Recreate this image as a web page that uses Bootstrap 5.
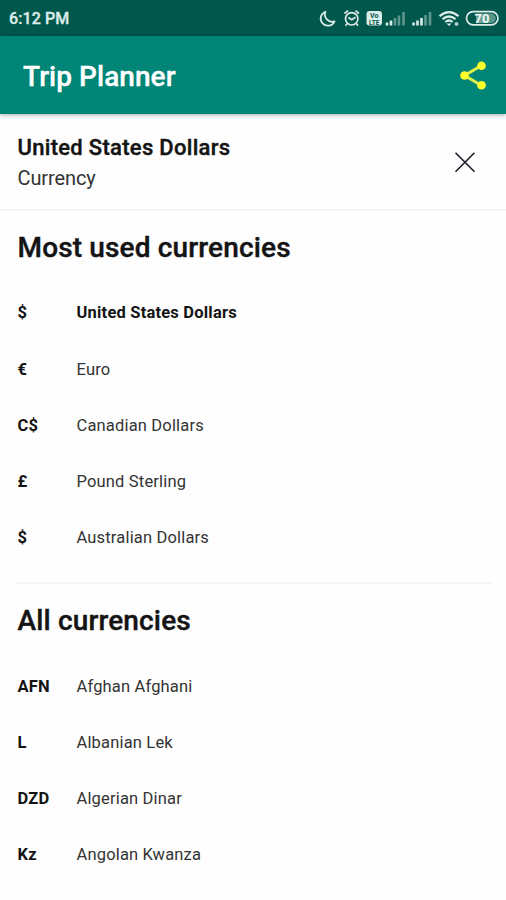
<!DOCTYPE html>
<html lang="en">
<head>
<meta charset="utf-8">
<meta name="viewport" content="width=device-width, initial-scale=1">
<title>Trip Planner</title>
<link href="https://cdn.jsdelivr.net/npm/bootstrap@5.3.0/dist/css/bootstrap.min.css" rel="stylesheet">
<style>
body { font-family: Roboto, "Liberation Sans", sans-serif; color: #141414; background: #fefefe; height: 900px; overflow: hidden; }
svg { display: block; flex: none; }
.status-bar { height: 36px; background: #00574b; color: #dcece9; padding: 1px 7px 0 9px; }
.clock { font-size: 16px; font-weight: 500; letter-spacing: .1px; -webkit-text-stroke: .35px; }
.app-bar { height: 78px; background: #008577; padding: 2px 19px 0 23px; box-shadow: 0 1px 4px rgba(0,0,0,.35); }
.app-title { font-size: 28px; font-weight: 500; line-height: 36px; letter-spacing: .05px; padding-top: 2px; -webkit-text-stroke: .35px; }
.selection { height: 97px; padding: 2px 30px 0 17.5px; border-bottom: 2px solid #f3f3f3; }
.selection-name { font-size: 22px; font-weight: 500; line-height: 30px; letter-spacing: .3px; -webkit-text-stroke: .4px; }
.selection-kind { font-size: 20px; line-height: 30px; color: #333; letter-spacing: -.1px; }
.section-title { font-size: 28px; font-weight: 500; height: 74px; padding-left: 17.5px; letter-spacing: .15px; -webkit-text-stroke: .4px; }
.currency { height: 56.25px; padding: 1px 17.5px 0; font-size: 16.5px; letter-spacing: .17px; color: #333; }
.symbol { width: 59px; font-weight: 700; color: #141414; }
.chosen { font-weight: 700; color: #141414; letter-spacing: .2px; }
.divider { height: 2px; background: #f6f6f6; margin: 16px 14px 0 16px; }
</style>
</head>
<body>
<header>
  <div class="status-bar d-flex align-items-center justify-content-between">
    <span class="clock">6:12 PM</span>
    <svg width="180" height="24" viewBox="0 0 180 24" fill="none" stroke="#dcece9" stroke-width="1.7">
      <path d="M6.500 4.700A7.200 7.200 0 1 0 15.500 14.300A7.200 7.200 0 0 1 6.500 4.700Z" stroke-linejoin="round"/>
      <circle cx="32.700" cy="11.800" r="6.200"/>
      <path d="M25.500 6.500 29 3.600M40 6.500 36.500 3.600M29.500 10.500 32.700 12.800 36.500 10.300M28 16.800 26.500 18.800M37.500 16.800 39 18.800"/>
      <rect x="47.500" y="4" width="15.500" height="14.500" rx="3" fill="#dcece9" stroke="none"/>
      <g fill="#00574b" stroke="none" font-family="Roboto, sans-serif" font-weight="700" text-anchor="middle"><text x="55.200" y="11" font-size="7">Vo</text><text x="55.200" y="17.500" font-size="6.500">LTE</text></g>
      <g stroke-width="2.600"><path d="M68 18.500V15.500M72 18.500V13.500"/><path stroke="#5f968d" d="M76 18.500V11M80 18.500V8.500M84.500 18.500V5"/><path d="M94.500 18.500V15.500M98.500 18.500V13.500M102.500 18.500V11"/><path stroke="#5f968d" d="M106.500 18.500V8M111 18.500V5"/></g>
      <g stroke-width="2.200"><path d="M120.500 9.200Q130 1.200 139.500 9.200M123.500 12.200Q130 6.800 136.500 12.200M126.300 15Q130 12 133.700 15"/><path d="M127.500 16.500 130 19 132.500 16.500Z" fill="#dcece9" stroke="none"/></g>
      <circle cx="137.500" cy="17" r="2" fill="#a9cdc7" stroke="none"/>
      <rect x="147.500" y="4.700" width="31.500" height="13.200" rx="6.600"/>
      <path d="M157 6.500h10v9.600H157z" fill="#6b9f97" stroke="none"/>
      <path d="M167 6.500h5a4.800 4.800 0 0 1 0 9.600h-5z" fill="#5a958b" stroke="none"/>
      <text x="163" y="16.100" font-family="Roboto, sans-serif" font-size="13" font-weight="700" text-anchor="middle" fill="#eef7f5" stroke="none">70</text>
    </svg>
  </div>
  <nav class="app-bar position-relative d-flex align-items-center justify-content-between">
    <span class="app-title text-white">Trip Planner</span>
    <svg width="28" height="30" viewBox="0 0 28 30" fill="#ffff2b"><path d="M22.500 4.500 5.500 14.500 22.500 24.500" fill="none" stroke="#dff04a" stroke-width="3"/><circle cx="22.500" cy="4.700" r="4.300"/><circle cx="5.500" cy="14.500" r="4.300"/><circle cx="22.500" cy="24.300" r="4.300"/></svg>
  </nav>
</header>
<main>
  <div class="selection d-flex align-items-center justify-content-between">
    <div><div class="selection-name">United States Dollars</div><div class="selection-kind">Currency</div></div>
    <svg width="22" height="22" viewBox="0 0 22 22" stroke="#1c1c28" stroke-width="1.600"><path d="M1.500 .8 20.500 19.800M20.500 .8 1.500 19.800"/></svg>
  </div>
  <section>
    <h2 class="section-title d-flex align-items-center mb-0">Most used currencies</h2>
    <ul class="list-unstyled mb-0">
      <li class="currency d-flex align-items-center"><span class="symbol">$</span><span class="chosen">United States Dollars</span></li>
      <li class="currency d-flex align-items-center"><span class="symbol">€</span><span>Euro</span></li>
      <li class="currency d-flex align-items-center"><span class="symbol">C$</span><span>Canadian Dollars</span></li>
      <li class="currency d-flex align-items-center"><span class="symbol">£</span><span>Pound Sterling</span></li>
      <li class="currency d-flex align-items-center"><span class="symbol">$</span><span>Australian Dollars</span></li>
    </ul>
  </section>
  <div class="divider"></div>
  <section>
    <h2 class="section-title d-flex align-items-center mb-0">All currencies</h2>
    <ul class="list-unstyled mb-0">
      <li class="currency d-flex align-items-center"><span class="symbol">AFN</span><span>Afghan Afghani</span></li>
      <li class="currency d-flex align-items-center"><span class="symbol">L</span><span>Albanian Lek</span></li>
      <li class="currency d-flex align-items-center"><span class="symbol">DZD</span><span>Algerian Dinar</span></li>
      <li class="currency d-flex align-items-center"><span class="symbol">Kz</span><span>Angolan Kwanza</span></li>
    </ul>
  </section>
</main>
<script src="https://cdn.jsdelivr.net/npm/bootstrap@5.3.0/dist/js/bootstrap.bundle.min.js"></script>
</body>
</html>
